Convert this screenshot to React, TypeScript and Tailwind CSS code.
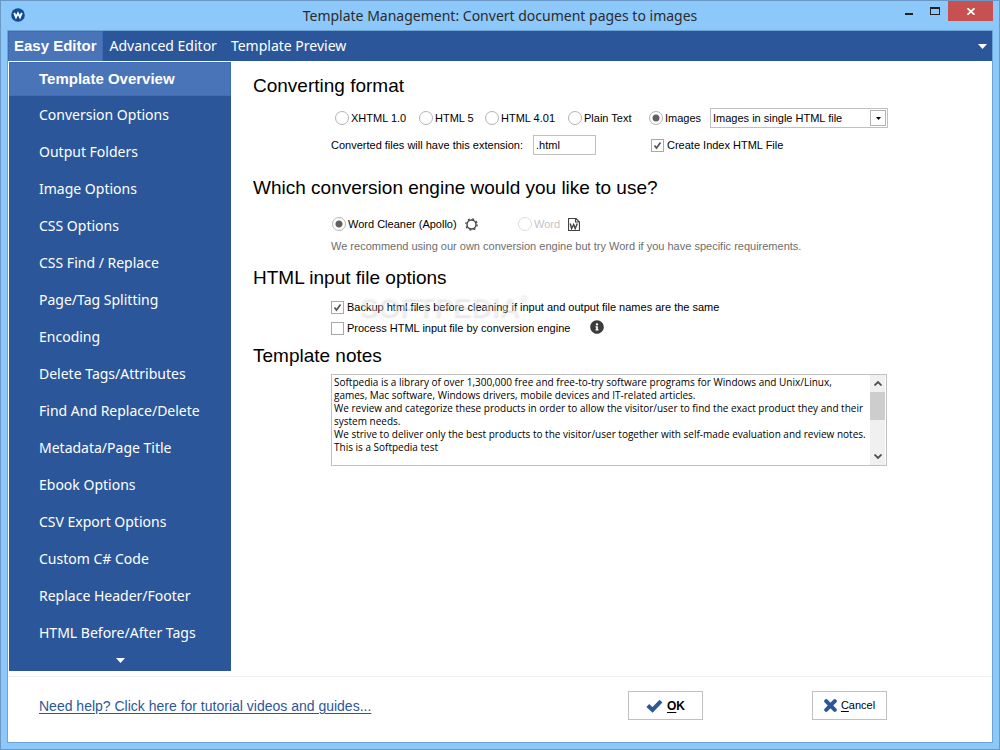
import React, { useState } from "react";
import { FaInfoCircle } from "react-icons/fa";

const NAV_ITEMS = [
  "Template Overview",
  "Conversion Options",
  "Output Folders",
  "Image Options",
  "CSS Options",
  "CSS Find / Replace",
  "Page/Tag Splitting",
  "Encoding",
  "Delete Tags/Attributes",
  "Find And Replace/Delete",
  "Metadata/Page Title",
  "Ebook Options",
  "CSV Export Options",
  "Custom C# Code",
  "Replace Header/Footer",
  "HTML Before/After Tags",
];

const TABS = ["Easy Editor", "Advanced Editor", "Template Preview"];

const FORMATS = ["XHTML 1.0", "HTML 5", "HTML 4.01", "Plain Text", "Images"];

const NOTES = `Softpedia is a library of over 1,300,000 free and free-to-try software programs for Windows and Unix/Linux,
games, Mac software, Windows drivers, mobile devices and IT-related articles.
We review and categorize these products in order to allow the visitor/user to find the exact product they and their system needs.
We strive to deliver only the best products to the visitor/user together with self-made evaluation and review notes.
This is a Softpedia test`;

type ChoiceProps = {
  label: string;
  checked: boolean;
  onChange: () => void;
  name?: string;
  disabled?: boolean;
};

function Radio({ label, checked, onChange, name, disabled }: ChoiceProps) {
  return (
    <label className={`flex items-center gap-0.5 whitespace-nowrap ${disabled ? "text-[#c4c4c4]" : ""}`}>
      <input
        type="radio"
        name={name}
        checked={checked}
        onChange={onChange}
        disabled={disabled}
        className="size-3.5 shrink-0 appearance-none rounded-full border border-[#b4b4b4] bg-white bg-[radial-gradient(circle,#606060_3px,transparent_4px)] not-checked:bg-none disabled:border-[#dcdcdc]"
      />
      {label}
    </label>
  );
}

function Checkbox({ label, checked, onChange }: ChoiceProps) {
  return (
    <label className="flex items-center gap-[3px] whitespace-nowrap">
      <span className="grid shrink-0">
        <input
          type="checkbox"
          checked={checked}
          onChange={onChange}
          className="col-start-1 row-start-1 size-[13px] appearance-none border border-[#a8a8a8] bg-white"
        />
        {checked && (
          <svg viewBox="0 0 13 13" className="pointer-events-none col-start-1 row-start-1 size-[13px]">
            <path d="M3.5 6.5 L5.5 9 L9.5 3.5" fill="none" stroke="#555" strokeWidth="1.7" />
          </svg>
        )}
      </span>
      {label}
    </label>
  );
}

function Heading({ children }: { children: React.ReactNode }) {
  return <h2 className="text-[19px] leading-6">{children}</h2>;
}

export default function App() {
  const [tab, setTab] = useState(0);
  const [page, setPage] = useState(0);
  const [format, setFormat] = useState("Images");
  const [engine, setEngine] = useState("apollo");
  const [index, setIndex] = useState(true);
  const [backup, setBackup] = useState(true);
  const [process, setProcess] = useState(false);

  return (
    <div className="flex min-h-screen flex-col border border-[#6b98c4] bg-[#8dc8fb] px-1.5 pb-1.5 font-['Liberation_Sans',Arial,sans-serif] text-[11px] text-black">
      {/* Title bar */}
      <header className="flex h-[29px] items-start">
        <div className="w-32 pt-[7px] pl-1">
          <svg viewBox="0 0 14 14" className="size-3.5">
            <circle cx="7" cy="7" r="6.8" fill="#134a94" />
            <path d="M3.2 4.8 L5 9.2 L7 5.2 L9 9.2 L10.8 4.8" fill="none" stroke="#fff" strokeWidth="1.8" />
          </svg>
        </div>
        <h1 className="flex-1 text-center font-['Noto_Sans','Open_Sans',sans-serif] text-[14px] leading-[29px] text-[#2b2b2b]">
          Template Management: Convert document pages to images
        </h1>
        <div className="flex w-32 justify-end">
          <button aria-label="Minimize" className="flex h-5 w-[26px] items-center justify-center">
            <svg viewBox="0 0 10 10" className="size-2.5">
              <path d="M1 8h8" stroke="#222" strokeWidth="2" />
            </svg>
          </button>
          <button aria-label="Maximize" className="flex h-5 w-[26px] items-center justify-center">
            <svg viewBox="0 0 10 8" className="h-2 w-2.5">
              <path d="M0 1h10" stroke="#222" strokeWidth="2" />
              <path d="M.5 0v8M9.5 0v8M0 7.5h10" stroke="#222" />
            </svg>
          </button>
          <button aria-label="Close" className="flex h-5 w-[45px] items-center justify-center bg-[#c75050]">
            <svg viewBox="0 0 8 7" className="h-[7px] w-2">
              <path d="M.5 .3 L7.5 6.7 M7.5 .3 L.5 6.7" stroke="#fff" strokeWidth="1.8" />
            </svg>
          </button>
        </div>
      </header>

      <div className="flex flex-1 flex-col border border-[#6ea3d6] bg-white">
        {/* Tabs */}
        <nav className="flex h-[30px] items-stretch bg-[#2b579a] font-['Noto_Sans','Open_Sans',sans-serif] text-[14px] text-white">
          {TABS.map((t, i) => (
            <button
              key={t}
              onClick={() => setTab(i)}
              className={
                tab === i
                  ? "border border-b-0 border-[#3e6db5] bg-[#4a74b8] px-[5px] font-['Liberation_Sans',Arial,sans-serif] text-[15px] font-bold"
                  : "px-[7px] pb-0.5"
              }
            >
              {t}
            </button>
          ))}
          <button aria-label="More tabs" className="ml-auto px-[5px]">
            <svg viewBox="0 0 9 5" className="h-[5px] w-[9px]">
              <path d="M0 0h9L4.5 5z" fill="#fff" />
            </svg>
          </button>
        </nav>

        <div className="flex flex-1">
          {/* Sidebar */}
          <aside className="mt-px mb-[5px] ml-px flex w-[222px] shrink-0 flex-col bg-[#2b579a] font-['Noto_Sans','Open_Sans',sans-serif] text-[14px] text-white">
            {NAV_ITEMS.map((item, i) => (
              <button
                key={item}
                onClick={() => setPage(i)}
                className={
                  page === i
                    ? "h-[34px] border border-[#3e6db5] bg-[#4a74b8] pl-[29px] text-left font-['Liberation_Sans',Arial,sans-serif] text-[15px] font-bold"
                    : "h-[37px] pl-[30px] text-left"
                }
              >
                {item}
              </button>
            ))}
            <button aria-label="Scroll down" className="flex h-[18px] items-center justify-center">
              <svg viewBox="0 0 9 5" className="h-[5px] w-[9px]">
                <path d="M0 0h9L4.5 5z" fill="#fff" />
              </svg>
            </button>
          </aside>

          <main className="min-w-0 flex-1 pt-[13px] pl-[22px]">
            <section>
              <Heading>Converting format</Heading>
              <div className="pl-[78px]">
                <div className="mt-2.5 grid h-5 grid-cols-[84px_66px_83px_81px_61px_178px] items-center pl-1">
                  {FORMATS.map((f) => (
                    <Radio key={f} name="format" label={f} checked={format === f} onChange={() => setFormat(f)} />
                  ))}
                  <div className="grid h-5 items-center">
                    <select
                      aria-label="Image output"
                      className="col-start-1 row-start-1 h-5 appearance-none border border-[#c0c0c0] bg-white pl-[2px]"
                    >
                      <option>Images in single HTML file</option>
                      <option>Images in separate files</option>
                    </select>
                    <span className="pointer-events-none col-start-1 row-start-1 mr-0.5 flex size-4 items-center justify-center justify-self-end border border-[#b4b4b4]">
                      <svg viewBox="0 0 5 3" className="h-[3px] w-[5px]">
                        <path d="M0 0h5L2.5 3z" fill="#000" />
                      </svg>
                    </span>
                  </div>
                </div>
                <div className="mt-[7px] grid h-5 grid-cols-[202px_118px_auto] items-center">
                  <label htmlFor="ext">Converted files will have this extension:</label>
                  <input id="ext" defaultValue=".html" className="h-5 w-[63px] border border-[#c0c0c0] px-0.5" />
                  <Checkbox label="Create Index HTML File" checked={index} onChange={() => setIndex(!index)} />
                </div>
              </div>
            </section>

            <section className="mt-[21px]">
              <Heading>Which conversion engine would you like to use?</Heading>
              <div className="pl-[78px]">
                <div className="mt-3.5 grid h-5 grid-cols-[186px_auto] items-center pl-px">
                  <div className="flex items-center gap-2">
                    <Radio
                      name="engine"
                      label="Word Cleaner (Apollo)"
                      checked={engine === "apollo"}
                      onChange={() => setEngine("apollo")}
                    />
                    <svg viewBox="0 0 13 13" className="size-[13px]">
                      <circle cx="6.5" cy="6.5" r="4.5" fill="none" stroke="#444" strokeWidth="1.4" />
                      <circle cx="6.5" cy="6.5" r="5.7" fill="none" stroke="#444" strokeWidth="1.2" strokeDasharray="2 2.48" />
                    </svg>
                  </div>
                  <div className="flex items-center gap-2">
                    <Radio
                      name="engine"
                      label="Word"
                      disabled
                      checked={engine === "word"}
                      onChange={() => setEngine("word")}
                    />
                    <svg viewBox="0 0 12 13" className="h-[13px] w-3" fill="none" stroke="#444">
                      <path d="M.5 .5h7.5l3.5 3.5v8.5h-11z M7.5 .5v3.5h3.5" strokeWidth="1.2" />
                      <path d="M2.3 5.5l1.3 5L5.7 6.5l1.5 4L9.3 5.5" strokeWidth="1.4" />
                    </svg>
                  </div>
                </div>
                <p className="mt-0.5 leading-5 text-[#6d6d6d]">
                  We recommend using our own conversion engine but try Word if you have specific requirements.
                </p>
              </div>
            </section>

            <section className="mt-2.5">
              <Heading>HTML input file options</Heading>
              <div className="relative pl-[78px]">
                <div className="mt-[7px] flex h-5 items-center">
                  <Checkbox
                    label="Backup html files before cleaning if input and output file names are the same"
                    checked={backup}
                    onChange={() => setBackup(!backup)}
                  />
                </div>
                <div className="mt-px flex h-5 items-center gap-5">
                  <Checkbox
                    label="Process HTML input file by conversion engine"
                    checked={process}
                    onChange={() => setProcess(!process)}
                  />
                  <FaInfoCircle className="mb-0.5 size-3.5 text-[#3c3c3c]" />
                </div>
                <div className="pointer-events-none absolute -top-2 left-[106px] flex text-[28px] leading-9 font-bold text-white/40 [text-shadow:1px_2px_2px_rgba(0,0,0,0.1)]">
                  SOFTPEDIA<span className="text-[11px] leading-4">®</span>
                </div>
              </div>
            </section>

            <section className="mt-1.5">
              <Heading>Template notes</Heading>
              <div className="mt-1.5 ml-[78px] flex h-[92px] w-[556px] border border-[#c0c0c0]">
                <textarea
                  aria-label="Template notes"
                  defaultValue={NOTES}
                  className="flex-1 resize-none overflow-hidden pt-px pl-[2px] font-['Open_Sans','Noto_Sans',sans-serif] text-[10px] leading-[13px] outline-none"
                />
                <div className="mr-px flex w-[15px] flex-col items-center bg-[#f0f0f0]">
                  <svg viewBox="0 0 8 5" className="my-1.5 h-[5px] w-2 shrink-0">
                    <path d="M.5 4.5L4 1l3.5 3.5" fill="none" stroke="#505050" strokeWidth="1.8" />
                  </svg>
                  <div className="h-7 w-full shrink-0 bg-[#cdcdcd]" />
                  <svg viewBox="0 0 8 5" className="mt-auto mb-1.5 h-[5px] w-2 shrink-0">
                    <path d="M.5 .5L4 4l3.5-3.5" fill="none" stroke="#505050" strokeWidth="1.8" />
                  </svg>
                </div>
              </div>
            </section>
          </main>
        </div>

        {/* Footer */}
        <footer className="flex h-[66px] items-start border-t border-[#f0f0f0] pt-3.5 pr-[105px] pl-[31px]">
          <a href="#help" className="mr-auto text-[14px] leading-[30px] text-[#2b579a] underline underline-offset-2">
            Need help? Click here for tutorial videos and guides...
          </a>
          <button className="mr-[109px] flex h-[29px] w-[75px] items-center justify-center gap-1 border border-[#c0c0c0] text-[12px] font-bold">
            <svg viewBox="0 0 17 14" className="h-3.5 w-[17px]">
              <path d="M1.8 6.5L6.5 11L15 2.2" fill="none" stroke="#2b579a" strokeWidth="4" />
            </svg>
            <span>
              <u className="underline-offset-2">O</u>K
            </span>
          </button>
          <button className="flex h-[29px] w-[75px] items-center justify-center gap-1 border border-[#c0c0c0]">
            <svg viewBox="0 0 13 13" className="size-[13px]">
              <path d="M2.2 2.2l8.6 8.6M10.8 2.2l-8.6 8.6" stroke="#2b579a" strokeWidth="4" strokeLinecap="round" />
            </svg>
            <span>
              <u className="underline-offset-2">C</u>ancel
            </span>
          </button>
        </footer>
      </div>
    </div>
  );
}
